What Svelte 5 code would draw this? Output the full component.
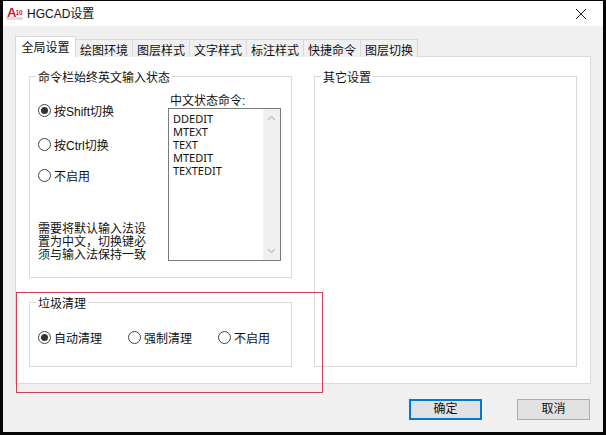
<script>
  const tabs = ['全局设置', '绘图环境', '图层样式', '文字样式', '标注样式', '快捷命令', '图层切换'];
  const commands = ['DDEDIT', 'MTEXT', 'TEXT', 'MTEDIT', 'TEXTEDIT'];
  const modes = [
    { label: '按Shift切换', on: true },
    { label: '按Ctrl切换', on: false },
    { label: '不启用', on: false }
  ];
  const cleanup = [
    { label: '自动清理', on: true },
    { label: '强制清理', on: false },
    { label: '不启用', on: false }
  ];
</script>

<div class="screen">
  <div class="window">
    <div class="titlebar">
      <span class="logo"><b>A</b><i>10</i></span>
      <span class="title">HGCAD设置</span>
      <svg class="close" width="12" height="12" viewBox="0 0 12 12"><path d="M1 1l10 10M11 1L1 11" stroke="#222" fill="none" /></svg>
    </div>

    <div class="body">
      <div class="tabs">
        {#each tabs as t, i (t)}
          <div class="tab" class:active={i === 0}>{t}</div>
        {/each}
      </div>

      <div class="panel">
        <div class="left">
          <fieldset class="group top">
            <legend>命令栏始终英文输入状态</legend>
            <div class="cols">
              <div class="modes">
                {#each modes as m (m.label)}
                  <div class="radio"><span class="dot" class:on={m.on}></span>{m.label}</div>
                {/each}
                <p class="note">需要将默认输入法设置为中文，切换键必须与输入法保持一致</p>
              </div>
              <div class="cmds">
                <div class="cmd-label">中文状态命令:</div>
                <div class="listbox">
                  <div class="items">
                    {#each commands as c (c)}<div>{c}</div>{/each}
                  </div>
                  <div class="scroll">
                    <svg width="9" height="6" viewBox="0 0 9 6"><path d="M1 5l3.5-3.5L8 5" stroke="#c4c4c4" stroke-width="1.5" fill="none" /></svg>
                    <svg width="9" height="6" viewBox="0 0 9 6"><path d="M1 1l3.5 3.5L8 1" stroke="#c4c4c4" stroke-width="1.5" fill="none" /></svg>
                  </div>
                </div>
              </div>
            </div>
          </fieldset>

          <fieldset class="group bottom">
            <legend>垃圾清理</legend>
            <div class="row">
              {#each cleanup as m (m.label)}
                <div class="radio"><span class="dot" class:on={m.on}></span>{m.label}</div>
              {/each}
            </div>
          </fieldset>
        </div>

        <fieldset class="group other">
          <legend>其它设置</legend>
        </fieldset>
      </div>

      <div class="actions">
        <button class="primary">确定</button>
        <button>取消</button>
      </div>
    </div>

    <div class="mark"></div>
  </div>
</div>

<style>
  :global(body) { margin: 0; background: #000; }
  .screen {
    width: 606px; height: 435px; box-sizing: border-box; overflow: hidden;
    background: #050505; padding: 1px 3px 3px 3px;
    font-family: "Liberation Sans", "Noto Sans CJK SC", sans-serif; font-size: 12px; color: #111;
  }
  .window { position: relative; height: 431px; display: flex; flex-direction: column; background: #f0f0f0; }
  .titlebar { height: 25px; flex: none; background: #fff; display: flex; align-items: center; padding: 0 16px 2px 3px; box-sizing: border-box; }
  .logo {
    flex: none; width: 17px; height: 14px; margin-right: 4px; padding-left: 1px; box-sizing: border-box; display: flex; align-items: center;
    background: linear-gradient(#fff 80%, #ddd 80%); color: #c8202a; line-height: 12px;
  }
  .logo b { font-size: 13px; }
  .logo i { font-size: 6.5px; font-style: normal; font-weight: bold; margin-left: -1px; }
  .title { flex: 1; }
  .close { flex: none; margin-top: 2px; }

  .body { flex: 1; padding: 8px 12px 0 12px; display: flex; flex-direction: column; }
  .tabs { height: 23px; display: flex; align-items: flex-end; position: relative; z-index: 1; margin-bottom: -1px; }
  .tab {
    width: 57px; height: 18px; box-sizing: border-box; padding-top: 2px; line-height: 18px; text-align: center;
    background: #f0f0f0; border: 1px solid #d9d9d9; border-left: 0; border-bottom: 0;
  }
  .tab.active {
    width: 61px; height: 21px; line-height: 18px; background: #fff;
    border: 1px solid #d9d9d9; border-bottom: 0;
  }
  .panel {
    width: 576px; height: 328px; box-sizing: border-box; background: #fff; border: 1px solid #d9d9d9;
    padding: 9px 13px 16px 13px; display: flex; gap: 22px;
  }
  .left { width: 263px; display: flex; flex-direction: column; justify-content: space-between; }
  .group { margin: 0; padding: 0; box-sizing: border-box; width: 263px; border: 1px solid #d9d9d9; position: relative; min-width: 0; }
  .group legend { margin-left: -2px; padding: 4px 2px 0; line-height: 16px; font-size: 12px; }
  .group.top { height: 212px; padding: 0 10px 0 8px; }
  .group.bottom { height: 75px; padding: 0 8px; }
  .group.other { height: 301px; }
  .group.other legend { margin-left: 6px; }

  .cols { display: flex; justify-content: space-between; height: 185px; }
  .modes { width: 118px; display: flex; flex-direction: column; padding-top: 17px; }
  .radio { display: flex; align-items: center; gap: 3px; height: 14px; white-space: nowrap; }
  .modes .radio { margin-bottom: 20px; }
  .modes .radio:nth-child(2) { margin-bottom: 17px; }
  .dot {
    width: 13px; height: 13px; box-sizing: border-box; flex: none; border-radius: 50%; border: 1px solid #444;
    background: #fff; position: relative;
  }
  .dot.on::after {
    content: ''; position: absolute; inset: 2px; border-radius: 50%; background: #333;
  }
  .note { margin: 21px 0 0; width: 112px; line-height: 13px; }
  .cmds { width: 113px; margin-top: 8px; }
  .cmd-label { padding-left: 2px; height: 14px; line-height: 15px; }
  .listbox {
    height: 153px; box-sizing: border-box; border: 1px solid #7a7a7a; background: #fff; display: flex; justify-content: space-between;
  }
  .items { padding: 3px 0 0 4px; font-size: 11px; line-height: 13px; font-family: "Noto Sans", sans-serif; }
  .scroll {
    width: 17px; background: #f0f0f0; display: flex; flex-direction: column; align-items: center; justify-content: space-between;
    padding: 6px 0;
  }
  .row { display: flex; padding-top: 18px; }
  .row .radio { flex: none; width: 90px; }

  .actions { display: flex; justify-content: flex-end; gap: 35px; padding: 15px 1px 0 0; }
  button {
    width: 73px; height: 21px; box-sizing: border-box; padding: 0; background: #e1e1e1; border: 1px solid #adadad;
    font: inherit; color: #111; line-height: 17px;
  }
  button.primary { border: 2px solid #0078d7; }

  .mark {
    position: absolute; left: 13px; top: 291px; width: 307px; height: 101px;
    border: 1px solid #d2404f; box-sizing: border-box; pointer-events: none;
  }
</style>
